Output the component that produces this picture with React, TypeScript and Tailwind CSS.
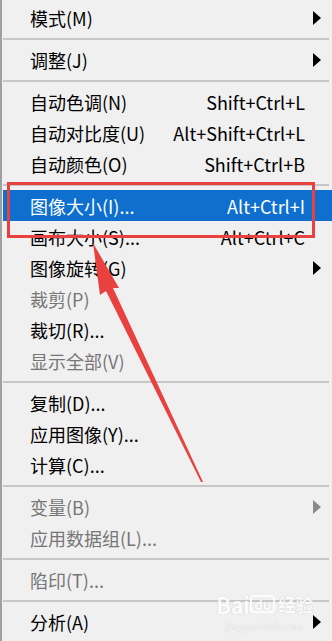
import React from 'react'

type Item =
  | { kind: 'sep' }
  | {
      kind: 'item'
      label: string
      shortcut?: string
      submenu?: boolean
      disabled?: boolean
      active?: boolean
    }

const items: Item[] = [
  { kind: 'item', label: '模式(M)', submenu: true },
  { kind: 'sep' },
  { kind: 'item', label: '调整(J)', submenu: true },
  { kind: 'sep' },
  { kind: 'item', label: '自动色调(N)', shortcut: 'Shift+Ctrl+L' },
  { kind: 'item', label: '自动对比度(U)', shortcut: 'Alt+Shift+Ctrl+L' },
  { kind: 'item', label: '自动颜色(O)', shortcut: 'Shift+Ctrl+B' },
  { kind: 'sep' },
  { kind: 'item', label: '图像大小(I)...', shortcut: 'Alt+Ctrl+I', active: true },
  { kind: 'item', label: '画布大小(S)...', shortcut: 'Alt+Ctrl+C' },
  { kind: 'item', label: '图像旋转(G)', submenu: true },
  { kind: 'item', label: '裁剪(P)', disabled: true },
  { kind: 'item', label: '裁切(R)...' },
  { kind: 'item', label: '显示全部(V)', disabled: true },
  { kind: 'sep' },
  { kind: 'item', label: '复制(D)...' },
  { kind: 'item', label: '应用图像(Y)...' },
  { kind: 'item', label: '计算(C)...' },
  { kind: 'sep' },
  { kind: 'item', label: '变量(B)', submenu: true, disabled: true },
  { kind: 'item', label: '应用数据组(L)...', disabled: true },
  { kind: 'sep' },
  { kind: 'item', label: '陷印(T)...', disabled: true },
  { kind: 'sep' },
  { kind: 'item', label: '分析(A)', submenu: true },
]

function SubArrow({ color }: { color: string }) {
  return (
    <svg width="8" height="14" viewBox="0 0 8 14" className="shrink-0">
      <polygon points="0,0 8,7 0,14" fill={color} />
    </svg>
  )
}

function MenuRow({ item }: { item: Extract<Item, { kind: 'item' }> }) {
  const text = item.active
    ? 'text-white'
    : item.disabled
      ? 'text-[#767676]'
      : 'text-black'
  return (
    <div
      className={`h-[31px] flex items-center pl-[27px] pr-[11px] ${
        item.active ? 'bg-[#0e6fcf]' : ''
      } ${text}`}
    >
      <span className="whitespace-nowrap">{item.label}</span>
      <div className="flex-1" />
      {item.shortcut && (
        <span className="whitespace-nowrap mr-[16px]">{item.shortcut}</span>
      )}
      {item.submenu && (
        <SubArrow color={item.disabled ? '#8a8a8a' : '#000'} />
      )}
    </div>
  )
}

export default function App() {
  return (
    <div
      className="relative w-[332px] h-[641px] overflow-hidden bg-[#f0f0f0] border-l-2 border-[#a0a0a0] text-[18px] leading-none"
      style={{ fontFamily: '"Noto Sans CJK SC", "Noto Sans", sans-serif' }}
    >
      <div className="flex flex-col pt-[2px] pl-px">
        {items.map((item, i) =>
          item.kind === 'sep' ? (
            <div key={i} className="h-[11px] pt-[5px] pr-[3px]">
              <div className="h-[2px] bg-[#c6c6c6]" />
            </div>
          ) : (
            <MenuRow key={i} item={item} />
          )
        )}
      </div>

      {/* red annotation box + arrow */}
      <div className="absolute left-[5px] top-[182px] w-[308px] h-[56px] border-[3px] border-[#e8413f]" />
      <svg
        className="absolute left-0 top-0 pointer-events-none"
        width="332"
        height="641"
        viewBox="0 0 332 641"
      >
        <polygon
          points="91,243 117,288 111,288 201,482 199,482 104,291 98,295"
          fill="#e8413f"
        />
      </svg>

      {/* baidu watermark */}
      <div className="absolute left-[214px] top-[592px] flex flex-col items-center text-white opacity-80 pointer-events-none">
        <div className="flex items-center h-[24px] text-[22px] font-bold leading-none tracking-tight [text-shadow:0_0_1px_#b0b0b0]">
          <span>Bai</span>
          <span className="text-[14px] mx-[1px] px-[2px] rounded-sm border-2 border-white">du</span>
          <span className="text-[18px] ml-[2px]">经验</span>
        </div>
        <span className="text-[9px] mt-[6px] [text-shadow:0_0_1px_#b0b0b0]">jingyan.baidu.com</span>
      </div>
    </div>
  )
}
